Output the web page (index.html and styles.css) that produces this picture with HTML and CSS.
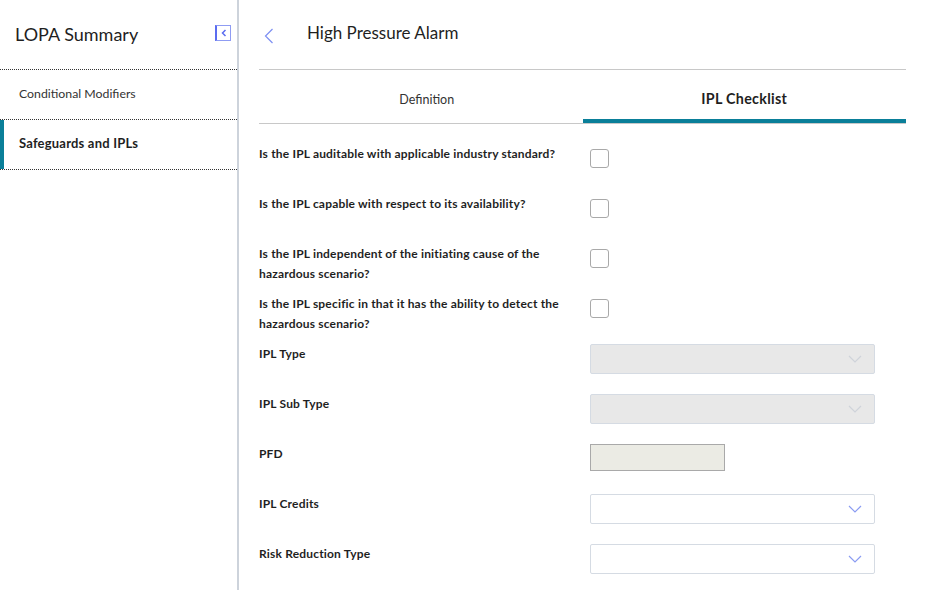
FILE: index.html
```html
<!DOCTYPE html>
<html>
<head>
<meta charset="utf-8">
<link rel="stylesheet" href="styles.css">
</head>
<body>
<div class="app">
  <aside class="sidebar">
    <div class="side-head">
      <span class="side-title">LOPA Summary</span>
      <span class="collapse">
        <svg width="6" height="8" viewBox="0 0 6 8"><path d="M4.5 1 L1.5 4 L4.5 7" fill="none" stroke="#5b6cf0" stroke-width="1.5"/></svg>
      </span>
    </div>
    <div class="side-item">Conditional Modifiers</div>
    <div class="side-item active">Safeguards and IPLs</div>
  </aside>
  <main class="main">
    <div class="head">
      <svg class="back" width="10" height="16" viewBox="0 0 10 16"><path d="M8.5 1 L1.5 8 L8.5 15" fill="none" stroke="#7d8ff2" stroke-width="1.2"/></svg>
      <span class="title">High Pressure Alarm</span>
    </div>
    <div class="tabs">
      <div class="tab first">Definition</div>
      <div class="tab active">IPL Checklist</div>
    </div>
    <div class="form">
      <div class="label">Is the IPL auditable with applicable industry standard?</div>
      <div class="ctl"><span class="check"></span></div>
      <div class="label">Is the IPL capable with respect to its availability?</div>
      <div class="ctl"><span class="check"></span></div>
      <div class="label">Is the IPL independent of the initiating cause of the hazardous scenario?</div>
      <div class="ctl"><span class="check"></span></div>
      <div class="label">Is the IPL specific in that it has the ability to detect the hazardous scenario?</div>
      <div class="ctl"><span class="check"></span></div>
      <div class="label">IPL Type</div>
      <div class="ctl"><div class="select disabled"><svg width="14" height="8" viewBox="0 0 14 8"><path d="M1 1 L7 7 L13 1" fill="none" stroke="#cfd3da" stroke-width="1.2"/></svg></div></div>
      <div class="label">IPL Sub Type</div>
      <div class="ctl"><div class="select disabled"><svg width="14" height="8" viewBox="0 0 14 8"><path d="M1 1 L7 7 L13 1" fill="none" stroke="#cfd3da" stroke-width="1.2"/></svg></div></div>
      <div class="label">PFD</div>
      <div class="ctl"><div class="input"></div></div>
      <div class="label">IPL Credits</div>
      <div class="ctl"><div class="select"><svg width="14" height="8" viewBox="0 0 14 8"><path d="M1 1 L7 7 L13 1" fill="none" stroke="#8b9cf2" stroke-width="1.2"/></svg></div></div>
      <div class="label">Risk Reduction Type</div>
      <div class="ctl"><div class="select"><svg width="14" height="8" viewBox="0 0 14 8"><path d="M1 1 L7 7 L13 1" fill="none" stroke="#8b9cf2" stroke-width="1.2"/></svg></div></div>
    </div>
  </main>
</div>
</body>
</html>
```

FILE: styles.css
```css
html, body {
  margin: 0;
  padding: 0;
  background: #ffffff;
  font-family: Lato, "Liberation Sans", sans-serif;
  color: #1f1f1f;
}
.app {
  display: flex;
  width: 926px;
  height: 590px;
  overflow: hidden;
}
.sidebar {
  flex: none;
  width: 239px;
  height: 590px;
  box-sizing: border-box;
  border-right: 2px solid #cdd3db;
}
.side-head {
  height: 69px;
  display: flex;
  align-items: center;
  justify-content: space-between;
  padding: 0 6px 0 15px;
  border-bottom: 1px dotted #333;
}
.side-title {
  font-size: 18px;
  color: #1f1f1f;
  margin-top: -1px;
}
.collapse {
  width: 13px;
  height: 14px;
  border: 1px solid #8f9cf3;
  border-left: 2px solid #5b6cf0;
  display: flex;
  align-items: center;
  justify-content: center;
  margin-top: -3px;
}
.side-item {
  height: 50px;
  box-sizing: border-box;
  display: flex;
  align-items: center;
  padding-left: 19px;
  padding-bottom: 2px;
  font-size: 12.3px;
  border-bottom: 1px dotted #333;
  color: #333;
}
.side-item.active {
  font-weight: bold;
  font-size: 13px;
  letter-spacing: 0.2px;
  color: #1f1f1f;
  padding-bottom: 3px;
  box-shadow: inset 4px 0 0 #0a7f99;
}
.main {
  flex: 1;
  padding: 0 20px;
}
.head {
  height: 70px;
  display: flex;
  align-items: center;
  border-bottom: 1px solid #c8c8c8;
  box-sizing: border-box;
}
.back {
  margin-left: 5px;
  margin-right: 33px;
  margin-top: 3px;
}
.title {
  font-size: 17px;
  margin-top: -4px;
}
.tabs {
  display: grid;
  grid-template-columns: 1fr 1fr;
  height: 53px;
  border-bottom: 1px solid #c8c8c8;
}
.tab {
  display: flex;
  align-items: center;
  justify-content: center;
  font-size: 12.5px;
  color: #333;
  box-sizing: border-box;
  padding-top: 5px;
}
.tab.first {
  padding-left: 12px;
}
.tab.active {
  font-weight: bold;
  font-size: 14.3px;
  letter-spacing: 0.3px;
  color: #1f1f1f;
  border-bottom: 4px solid #0a7f99;
  padding-top: 8px;
}
.form {
  margin-top: 20px;
  display: grid;
  grid-template-columns: 331px 285px;
  grid-auto-rows: 50px;
}
.label {
  font-size: 12px;
  font-weight: bold;
  letter-spacing: 0.18px;
  line-height: 20px;
  color: #1f1f1f;
  padding-right: 30px;
}
.ctl {
  display: flex;
  align-items: flex-start;
}
.check {
  margin-top: 5px;
  width: 17px;
  height: 17px;
  border: 1px solid #a9a9a9;
  border-radius: 3px;
  background: #fff;
}
.select {
  width: 285px;
  height: 30px;
  box-sizing: border-box;
  border: 1px solid #d5dbe3;
  border-radius: 2px;
  background: #fff;
  display: flex;
  align-items: center;
  justify-content: flex-end;
  padding-right: 12px;
}
.select.disabled {
  background: #e8e8e8;
}
.input {
  width: 135px;
  height: 27px;
  box-sizing: border-box;
  border: 1px solid #a9a9a9;
  background: #ebebe4;
}
```
